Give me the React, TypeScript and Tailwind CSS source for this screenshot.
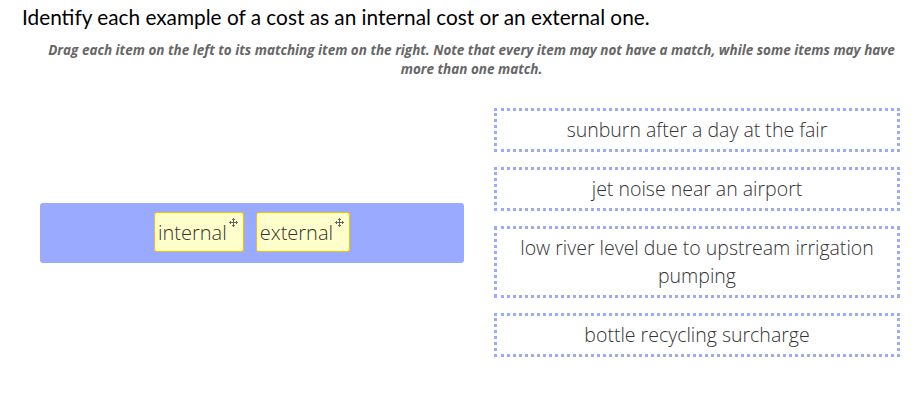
import React from 'react';

const targets = [
  'sunburn after a day at the fair',
  'jet noise near an airport',
  'low river level due to upstream irrigation pumping',
  'bottle recycling surcharge',
];

function MoveIcon() {
  return (
    <svg width="9" height="9" viewBox="0 0 9 9" className="absolute top-[5px] right-[5px]" fill="#666" shapeRendering="crispEdges">
      <rect x="4" y="0" width="1" height="9" />
      <rect x="0" y="4" width="9" height="1" />
      <rect x="3" y="1" width="3" height="1" />
      <rect x="3" y="7" width="3" height="1" />
      <rect x="1" y="3" width="1" height="3" />
      <rect x="7" y="3" width="1" height="3" />
    </svg>
  );
}

function Chip({ label }: { label: string }) {
  return (
    <div className="relative h-[40px] pl-[3px] pr-[16px] pt-[8px] bg-[#ffffcc] border border-[#f2c200] rounded-[3px] text-[20px] leading-[24px] font-light text-[#333]">
      {label}
      <MoveIcon />
    </div>
  );
}

export default function App() {
  return (
    <div className="w-[915px] h-[413px] bg-white" style={{ fontFamily: '"Open Sans", sans-serif' }}>
      <h1 className="pl-[22px] pt-[4px] text-[20.8px] leading-[26px] text-black" style={{ fontFamily: 'Lato, sans-serif' }}>
        Identify each example of a cost as an internal cost or an external one.
      </h1>
      <p className="mt-[11px] pl-[38px] pr-[10px] text-center text-[13.5px] leading-[19px] font-bold italic text-[#666]">
        Drag each item on the left to its matching item on the right. Note that every item may not have a match, while some items may have more than one match.
      </p>
      <div className="flex mt-[18px]">
        <div className="w-[494px] pl-[40px] pr-[30px] pt-[11px] flex items-center">
          <div className="w-full h-[60px] bg-[#99aaff] rounded-[3px] flex justify-center items-start gap-[12px] pt-[9px]">
            <Chip label="internal" />
            <Chip label="external" />
          </div>
        </div>
        <div className="w-[406px] flex flex-col gap-[15px] pt-[11px]">
          {targets.map((t) => (
            <div key={t} className="border-[3px] border-dotted border-[#99aaff] px-[16px] py-[5px] text-center text-[19.5px] leading-[28px] font-light text-[#333]">
              {t}
            </div>
          ))}
        </div>
      </div>
    </div>
  );
}
